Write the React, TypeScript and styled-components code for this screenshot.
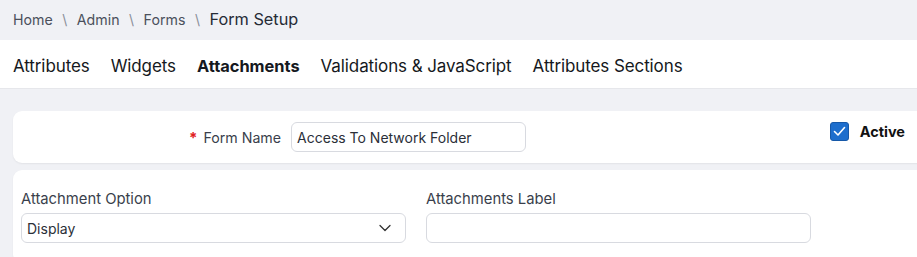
import React from "react";
import styled, { createGlobalStyle } from "styled-components";

const Global = createGlobalStyle`
  html, body { margin: 0; padding: 0; }
  body {
    background: #f0f1f5;
    font-family: Inter, "Noto Sans", sans-serif;
    overflow: hidden;
  }
  * { box-sizing: border-box; }
`;

const Page = styled.div`
  width: 917px;
  height: 257px;
  overflow: hidden;
  display: flex;
  flex-direction: column;
  & > * { flex-shrink: 0; }
`;

const Breadcrumb = styled.nav`
  height: 40px;
  display: flex;
  align-items: center;
  padding: 0 13px 2px;
  gap: 9.5px;
  font-size: 14.2px;
  color: #4b505c;
`;

const Sep = styled.span`
  color: #8a8f99;
  font-size: 14px;
`;

const Current = styled.span`
  font-size: 16.3px;
  color: #262b36;
`;

const TabBar = styled.div`
  height: 49px;
  background: #fff;
  display: flex;
  align-items: center;
  padding: 3px 13px 0;
  gap: 21px;
  border-bottom: 1px solid #e6e7eb;
`;

const Tab = styled.span<{ $active?: boolean }>`
  font-size: ${(p) => (p.$active ? "16.4px" : "17px")};
  color: #151820;
  font-weight: ${(p) => (p.$active ? 700 : 400)};
  letter-spacing: ${(p) => (p.$active ? "0" : "-0.1px")};
`;

const Body = styled.div`
  padding: 22px 0 0 13px;
  display: flex;
  flex-direction: column;
  gap: 7px;
`;

const Card = styled.section`
  background: #fff;
  border-radius: 9px 0 0 9px;
  box-shadow: 0 1px 2px rgba(0, 0, 0, 0.06);
  width: 920px;
`;

const NameRow = styled.div`
  height: 52px;
  display: flex;
  align-items: center;
  padding-left: 176px;
`;

const Required = styled.span`
  color: #e0201b;
  font-size: 15px;
  font-weight: 700;
  margin-right: 6px;
`;

const InlineLabel = styled.label`
  font-size: 14.2px;
  color: #3a3f4c;
  margin-right: 10px;
`;

const Input = styled.div<{ $w: number }>`
  width: ${(p) => p.$w}px;
  height: 30px;
  border: 1px solid #d8dae0;
  border-radius: 6px;
  display: flex;
  align-items: center;
  padding: 0 5px;
  font-size: 14px;
  color: #2b2f38;
  background: #fff;
`;

const CheckWrap = styled.div`
  margin-left: auto;
  margin-right: 28px;
  display: flex;
  align-items: center;
  gap: 11px;
  align-self: flex-start;
  margin-top: 11px;
`;

const Box = styled.span`
  width: 19px;
  height: 19px;
  border-radius: 3px;
  background: #1d6ecd;
  border: 1px solid #1658a8;
  display: flex;
  align-items: center;
  justify-content: center;
`;

const CheckLabel = styled.span`
  font-size: 14.5px;
  font-weight: 700;
  color: #111;
`;

const Grid = styled.div`
  display: grid;
  grid-template-columns: 385px 385px;
  column-gap: 20px;
  padding: 20px 8px 20px;
`;

const Field = styled.div`
  display: flex;
  flex-direction: column;
  gap: 5px;
`;

const Label = styled.label`
  font-size: 14.8px;
  color: #3a3f4c;
`;

const Select = styled(Input)`
  justify-content: space-between;
  padding-right: 14px;
`;

export default function App() {
  return (
    <>
      <Global />
      <Page>
        <Breadcrumb>
          <span>Home</span>
          <Sep>\</Sep>
          <span>Admin</span>
          <Sep>\</Sep>
          <span>Forms</span>
          <Sep>\</Sep>
          <Current>Form Setup</Current>
        </Breadcrumb>
        <TabBar>
          <Tab>Attributes</Tab>
          <Tab>Widgets</Tab>
          <Tab $active>Attachments</Tab>
          <Tab>Validations &amp; JavaScript</Tab>
          <Tab>Attributes Sections</Tab>
        </TabBar>
        <Body>
          <Card>
            <NameRow>
              <Required>*</Required>
              <InlineLabel>Form Name</InlineLabel>
              <Input $w={235}>Access To Network Folder</Input>
              <CheckWrap>
                <Box>
                  <svg width="13" height="11" viewBox="0 0 13 11" fill="none">
                    <path d="M1.5 5.5 L5 9 L11.5 1.5" stroke="#fff" strokeWidth="1.6" strokeLinecap="round" strokeLinejoin="round" />
                  </svg>
                </Box>
                <CheckLabel>Active</CheckLabel>
              </CheckWrap>
            </NameRow>
          </Card>
          <Card>
            <Grid>
              <Field>
                <Label>Attachment Option</Label>
                <Select $w={385}>
                  <span>Display</span>
                  <svg width="12" height="8" viewBox="0 0 12 8" fill="none">
                    <path d="M1 1.5 L6 6.5 L11 1.5" stroke="#333" strokeWidth="1.3" strokeLinecap="round" strokeLinejoin="round" />
                  </svg>
                </Select>
              </Field>
              <Field>
                <Label>Attachments Label</Label>
                <Input $w={385} />
              </Field>
            </Grid>
          </Card>
        </Body>
      </Page>
    </>
  );
}
